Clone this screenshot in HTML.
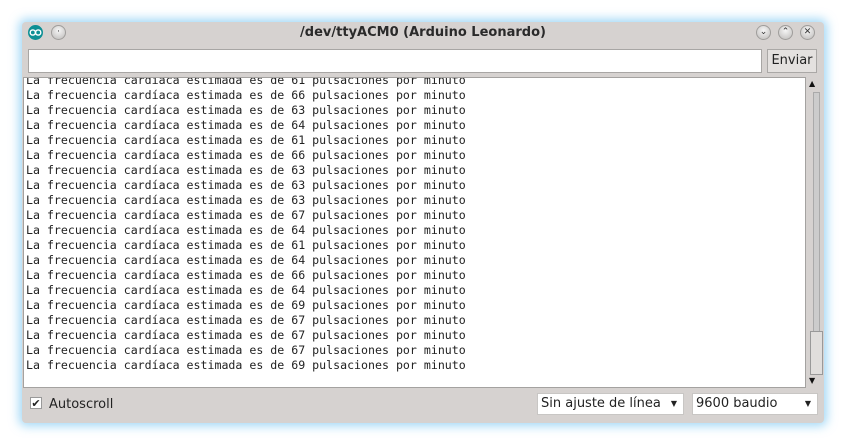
<!DOCTYPE html>
<html><head><style>
body{margin:0;width:846px;height:445px;background:#fff;position:relative;overflow:hidden;font-family:"DejaVu Sans","Liberation Sans",sans-serif;}
.win{position:absolute;left:22px;top:22px;width:802px;height:401px;background:#d6d2d0;border-radius:4px;box-shadow:0 0 10px 3px rgba(100,190,240,.6);}
.title{position:absolute;left:0;top:0;width:802px;height:22px;text-align:center;font-weight:bold;font-size:13px;line-height:22px;color:#2a2a2a;}
.ico{position:absolute;top:3px;width:15px;height:15px;border-radius:50%;}
.btn{background:radial-gradient(circle at 50% 35%,#f6f6f6,#bdbbb9);border:1px solid #9f9d9b;box-sizing:border-box;font-size:9px;line-height:13px;text-align:center;color:#333;}
.input{position:absolute;left:6px;top:27px;width:734px;height:24px;background:#fff;border:1px solid #a8a6a4;box-sizing:border-box;}
.env{position:absolute;left:745px;top:27px;width:50px;height:24px;border:1px solid #aaa8a6;box-sizing:border-box;background:#e4e1df;font-size:13px;line-height:22px;text-align:center;color:#222;}
.ta{position:absolute;left:1px;top:55px;width:783px;height:311px;background:#fff;border:1px solid #a4a2a0;box-sizing:border-box;overflow:hidden;}
.ta pre{margin:0;position:absolute;left:2px;top:-5px;font-family:"DejaVu Sans Mono","Liberation Mono",monospace;font-size:11.6px;line-height:15px;color:#222;}
.sel{position:absolute;top:371px;height:22px;background:#fff;border:1px solid #c8c6c4;box-sizing:border-box;font-size:13px;line-height:20px;padding-left:3px;color:#222;}
.sel span{position:absolute;right:6px;top:0;font-size:8px;}
</style></head><body>
<div class="win">
<div class="title">/dev/ttyACM0 (Arduino Leonardo)</div>
<div class="ico" style="left:6px;background:#0d8f94;"><svg width="15" height="15"><circle cx="4.8" cy="7.5" r="2.6" fill="none" stroke="#fff" stroke-width="1.4"/><circle cx="10.2" cy="7.5" r="2.6" fill="none" stroke="#fff" stroke-width="1.4"/></svg></div>
<div class="ico btn" style="left:29px;">·</div>
<div class="ico btn" style="left:734px;">⌄</div>
<div class="ico btn" style="left:756px;">⌃</div>
<div class="ico btn" style="left:778px;">✕</div>
<div class="input"></div>
<div class="env">Enviar</div>
<div class="ta"><pre>La frecuencia cardíaca estimada es de 61 pulsaciones por minuto
La frecuencia cardíaca estimada es de 66 pulsaciones por minuto
La frecuencia cardíaca estimada es de 63 pulsaciones por minuto
La frecuencia cardíaca estimada es de 64 pulsaciones por minuto
La frecuencia cardíaca estimada es de 61 pulsaciones por minuto
La frecuencia cardíaca estimada es de 66 pulsaciones por minuto
La frecuencia cardíaca estimada es de 63 pulsaciones por minuto
La frecuencia cardíaca estimada es de 63 pulsaciones por minuto
La frecuencia cardíaca estimada es de 63 pulsaciones por minuto
La frecuencia cardíaca estimada es de 67 pulsaciones por minuto
La frecuencia cardíaca estimada es de 64 pulsaciones por minuto
La frecuencia cardíaca estimada es de 61 pulsaciones por minuto
La frecuencia cardíaca estimada es de 64 pulsaciones por minuto
La frecuencia cardíaca estimada es de 66 pulsaciones por minuto
La frecuencia cardíaca estimada es de 64 pulsaciones por minuto
La frecuencia cardíaca estimada es de 69 pulsaciones por minuto
La frecuencia cardíaca estimada es de 67 pulsaciones por minuto
La frecuencia cardíaca estimada es de 67 pulsaciones por minuto
La frecuencia cardíaca estimada es de 67 pulsaciones por minuto
La frecuencia cardíaca estimada es de 69 pulsaciones por minuto</pre></div>
<div style="position:absolute;left:787px;top:57px;font-size:8px;color:#111;">▲</div>
<div style="position:absolute;left:791px;top:70px;width:5px;height:240px;border:1px solid #aaa;background:#ccc;"></div>
<div style="position:absolute;left:788px;top:309px;width:11px;height:42px;border:1px solid #999;background:#e0dedc;"></div>
<div style="position:absolute;left:787px;top:354px;font-size:8px;color:#111;">▼</div>
<div style="position:absolute;left:8px;top:375px;width:12px;height:12px;background:#fff;border:1px solid #999;box-sizing:border-box;font-size:11px;line-height:11px;text-align:center;color:#222;">✔</div>
<div style="position:absolute;left:27px;top:375px;font-size:13px;color:#222;">Autoscroll</div>
<div class="sel" style="left:515px;width:147px;">Sin ajuste de línea<span>▼</span></div>
<div class="sel" style="left:670px;width:126px;">9600 baudio<span>▼</span></div>
</div>
</body></html>
